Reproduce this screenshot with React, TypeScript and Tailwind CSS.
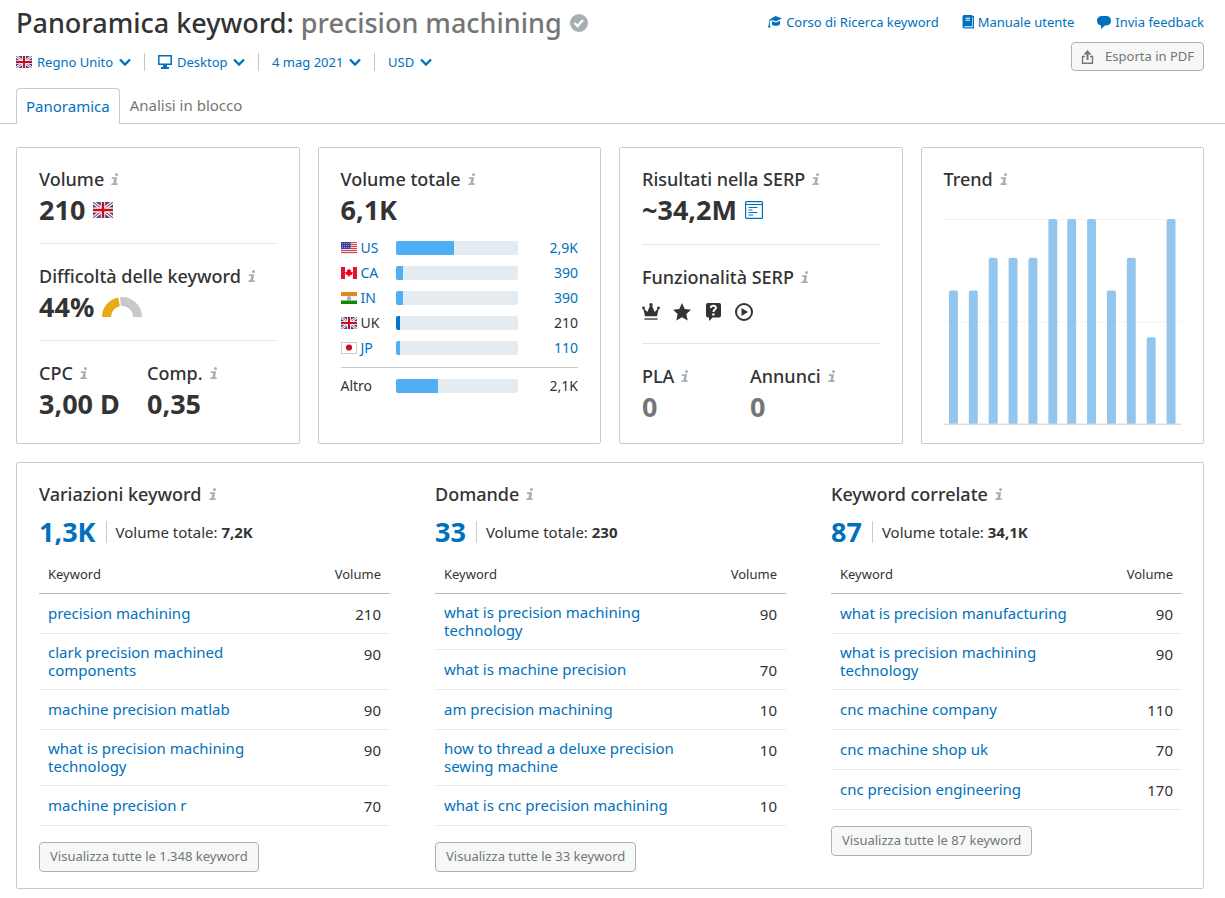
import React from "react";
import clsx from "clsx";

type Country = "us" | "ca" | "in" | "uk" | "jp";

interface VolumeRow {
  code: Country;
  label: string;
  volume: string;
  share: number;
  current?: boolean;
}

interface KeywordRow {
  keyword: string;
  volume: number;
}

interface KeywordGroup {
  title: string;
  count: string;
  total: string;
  more: string;
  rows: KeywordRow[];
}

const volumes: VolumeRow[] = [
  { code: "us", label: "US", volume: "2,9K", share: 47.5 },
  { code: "ca", label: "CA", volume: "390", share: 6.5 },
  { code: "in", label: "IN", volume: "390", share: 6.5 },
  { code: "uk", label: "UK", volume: "210", share: 3.3, current: true },
  { code: "jp", label: "JP", volume: "110", share: 3.3 },
];

const trend = [134, 134, 167, 167, 167, 206, 206, 206, 134, 167, 87, 206];

const groups: KeywordGroup[] = [
  {
    title: "Variazioni keyword",
    count: "1,3K",
    total: "7,2K",
    more: "Visualizza tutte le 1.348 keyword",
    rows: [
      { keyword: "precision machining", volume: 210 },
      { keyword: "clark precision machined components", volume: 90 },
      { keyword: "machine precision matlab", volume: 90 },
      { keyword: "what is precision machining technology", volume: 90 },
      { keyword: "machine precision r", volume: 70 },
    ],
  },
  {
    title: "Domande",
    count: "33",
    total: "230",
    more: "Visualizza tutte le 33 keyword",
    rows: [
      { keyword: "what is precision machining technology", volume: 90 },
      { keyword: "what is machine precision", volume: 70 },
      { keyword: "am precision machining", volume: 10 },
      { keyword: "how to thread a deluxe precision sewing machine", volume: 10 },
      { keyword: "what is cnc precision machining", volume: 10 },
    ],
  },
  {
    title: "Keyword correlate",
    count: "87",
    total: "34,1K",
    more: "Visualizza tutte le 87 keyword",
    rows: [
      { keyword: "what is precision manufacturing", volume: 90 },
      { keyword: "what is precision machining technology", volume: 90 },
      { keyword: "cnc machine company", volume: 110 },
      { keyword: "cnc machine shop uk", volume: 70 },
      { keyword: "cnc precision engineering", volume: 170 },
    ],
  },
];

const Flag = ({ code, className }: { code: Country; className: string }) => (
  <svg viewBox="0 0 16 12" preserveAspectRatio="none" className={clsx("shrink-0", className)} aria-hidden="true">
    {code === "uk" && (
      <>
        <rect width="16" height="12" fill="#2b4c9b" />
        <path d="M0 0 16 12M16 0 0 12" stroke="#fff" strokeWidth="2.6" />
        <path d="M0 0 16 12M16 0 0 12" stroke="#d8262f" strokeWidth="0.8" />
        <path d="M8 0v12M0 6h16" stroke="#fff" strokeWidth="3.6" />
        <path d="M8 0v12M0 6h16" stroke="#cf0a1c" strokeWidth="2" />
      </>
    )}
    {code === "us" && (
      <>
        <rect width="16" height="12" fill="#f6e3e5" />
        <path d="M0 .5h16M0 2.5h16M0 4.5h16M0 6.5h16M0 8.5h16M0 10.5h16" stroke="#d3404e" />
        <rect width="9.5" height="7" fill="#3d3f9e" />
        <path d="M1 1.5h8M1 3.5h8M1 5.5h8" stroke="#a9aad8" strokeWidth="0.8" strokeDasharray="1 1" />
      </>
    )}
    {code === "ca" && (
      <>
        <rect width="16" height="12" fill="#fff" />
        <path d="M0 0h4v12H0zM12 0h4v12h-4z" fill="#e8112d" />
        <path d="m8 1.500 1.200 1.700 1-.3-.3 1.900 2 .2-.6 1.300.4.600L9.200 8.500h-.8V10h-.8V8.500h-.8L4.300 6.900l.4-.6L4.100 5l2-.2-.3-1.900 1 .3z" fill="#f00018" />
      </>
    )}
    {code === "in" && (
      <>
        <rect width="16" height="12" fill="#fff" />
        <path d="M0 0h16v4H0z" fill="#e08a1e" />
        <path d="M0 8.5h16V12H0z" fill="#138808" />
        <circle cx="8" cy="6.2" r="1.7" fill="#b9c3e4" stroke="#5a6fb5" strokeWidth="0.6" />
      </>
    )}
    {code === "jp" && (
      <>
        <rect x=".5" y=".5" width="15" height="11" fill="#fff" stroke="#ccc" />
        <circle cx="8" cy="5.5" r="3.1" fill="#c8102e" />
      </>
    )}
  </svg>
);

const InfoIcon = () => (
  <svg viewBox="0 0 8 12" className="h-3 w-2 shrink-0" fill="#a6b0b3" aria-hidden="true">
    <circle cx="5.5" cy="1.5" r="1.5" />
    <path d="M1 4.3h5.200L5 10.300h1.800L6.500 12H.3l.3-1.700h1.800L3.200 6H.7z" />
  </svg>
);

const Chevron = () => (
  <svg viewBox="0 0 12 8" className="h-2 w-3 shrink-0" aria-hidden="true">
    <path d="m1 1.5 5 5 5-5" fill="none" stroke="#0071bc" strokeWidth="2.4" />
  </svg>
);

interface FilterProps {
  name: string;
  value: string;
  icon?: React.ReactNode;
}
const Filter = ({ name, value, icon }: FilterProps) => (
  <label className="flex items-center gap-[5px]">
    {icon}
    <select aria-label={name} className="cursor-pointer appearance-none bg-transparent text-[13px] leading-5 text-[#0071bc]">
      <option>{value}</option>
    </select>
    <Chevron />
  </label>
);

const Separator = () => <span className="mx-[13px] h-[18px] w-px bg-[#c4c7c8]" />;

const Heading = ({ children }: { children: React.ReactNode }) => (
  <h2 className="flex items-center gap-[7px] text-lg leading-6 font-medium whitespace-nowrap">
    {children}
    <InfoIcon />
  </h2>
);

interface MetricProps {
  title: string;
  children: React.ReactNode;
  className?: string;
}
const Metric = ({ title, children, className }: MetricProps) => (
  <div className={className}>
    <Heading>{title}</Heading>
    <div className="flex h-[38px] items-center gap-2 text-[27px] leading-8 font-bold">{children}</div>
  </div>
);

const Card = ({ children }: { children: React.ReactNode }) => (
  <section className="min-h-[297px] rounded-xs border border-[#c9cccd] px-[22px] pt-[19px]">{children}</section>
);

const Divider = () => <hr className="mt-3.5 mb-5 border-[#e4e8e9]" />;

const Gauge = () => (
  <svg viewBox="0 0 40 20" className="h-5 w-10" aria-hidden="true">
    <path d="M4.5 20A15.5 15.5 0 0 1 17 4.8" fill="none" stroke="#e6ab17" strokeWidth="9" />
    <path d="M18.500 4.600A15.500 15.500 0 0 1 35.500 20" fill="none" stroke="#c9c9c9" strokeWidth="9" />
  </svg>
);

const Bar = ({ share, current }: { share: number; current?: boolean }) => (
  <div className="h-3.5 overflow-hidden rounded-xs bg-[#e4ebf1]">
    <div className={clsx("h-full", current ? "bg-[#0a72c4]" : "bg-[#50aef4]")} style={{ width: `${share}%` }} />
  </div>
);

const VolumeTable = () => (
  <table className="w-full table-fixed text-sm leading-5">
    <colgroup>
      <col className="w-[55px]" />
      <col />
      <col className="w-[60px]" />
    </colgroup>
    <tbody>
      {volumes.map((row) => (
        <tr key={row.code} className="h-[25px]">
          <td>
            <span className="flex items-center gap-1">
              <Flag code={row.code} className="h-3 w-4" />
              {row.current ? row.label : <a href="#" className="text-[#0071bc]">{row.label}</a>}
            </span>
          </td>
          <td><Bar share={row.share} current={row.current} /></td>
          <td className="text-right">
            {row.current ? row.volume : <a href="#" className="text-[#0071bc]">{row.volume}</a>}
          </td>
        </tr>
      ))}
    </tbody>
    <tbody>
      <tr>
        <td colSpan={3} className="h-[7px] border-b border-[#c9cccd] p-0 leading-none" />
      </tr>
      <tr className="h-[38px]">
        <td>Altro</td>
        <td><Bar share={34.5} /></td>
        <td className="text-right">2,1K</td>
      </tr>
    </tbody>
  </table>
);

const SerpFeatures = () => (
  <div className="flex gap-[13px] pt-2">
    <svg viewBox="0 0 18 18" className="size-[18px]" fill="currentColor" role="img" aria-label="Sitelink">
      <path d="M1 4.500 5.300 9 8.300 2h1.400l3 7L17 4.500 15 13.300H3z" />
      <path d="M2.500 15h13v2h-13z" fill="#777" />
      <circle cx="1.500" cy="5" r="1.400" />
      <circle cx="9" cy="1.800" r="1.700" />
      <circle cx="16.500" cy="5" r="1.400" />
    </svg>
    <svg viewBox="0 0 18 18" className="size-[18px]" fill="currentColor" role="img" aria-label="Recensioni">
      <path d="m9 0 2.700 6 6.300.7-4.700 4.300 1.400 6.500L9 14.200l-5.700 3.300L4.700 11 0 6.700 6.300 6z" />
    </svg>
    <svg viewBox="0 0 18 18" className="size-[18px]" fill="currentColor" role="img" aria-label="Domande">
      <path d="M4 0h11a2 2 0 0 1 2 2v10.500a2 2 0 0 1-2 2H8.500L5 18v-3.500H4a2 2 0 0 1-2-2V2a2 2 0 0 1 2-2z" />
      <path d="M6.800 5c0-3 5.200-2.900 5.200-.2C12 6.500 9.400 6.600 9.400 9" fill="none" stroke="#fff" strokeWidth="1.900" />
      <circle cx="9.400" cy="11.500" r="1.200" fill="#fff" />
    </svg>
    <svg viewBox="0 0 18 18" className="size-[18px]" fill="currentColor" role="img" aria-label="Video">
      <circle cx="9" cy="9" r="8" fill="none" stroke="currentColor" strokeWidth="2" />
      <path d="M6.500 5v8L13 9z" />
    </svg>
  </div>
);

const TrendChart = () => (
  <svg viewBox="0 0 239 208" className="mt-7 w-full" role="img" aria-label="Trend">
    <path d="M0 .5h239M0 103.500h239" stroke="#f1f3f4" />
    {trend.map((value, i) => (
      <path
        key={i}
        d={`M${5 + Math.round(i * 19.9)} 206v${-value + 2}q0-2 2-2h5q2 0 2 2v${value - 2}z`}
        fill="#92c6ee"
      />
    ))}
    <path d="M0 206.500h239" stroke="#c9cccd" />
  </svg>
);

const KeywordList = ({ group }: { group: KeywordGroup }) => (
  <section className="flex flex-col items-start">
    <Heading>{group.title}</Heading>
    <div className="mt-2 flex h-9 items-center">
      <a href="#" className="text-[27px] leading-8 font-bold text-[#0071bc]">{group.count}</a>
      <p className="ml-2.5 border-l border-[#c9cccd] pl-[9px] text-[15px] leading-[22px]">
        Volume totale: <strong>{group.total}</strong>
      </p>
    </div>
    <table className="mt-[5px] w-full border-separate border-spacing-0">
      <thead>
        <tr className="h-[39px] text-[13px] leading-5">
          <th className="border-b border-[#b3bcbf] px-[9px] text-left font-normal">Keyword</th>
          <th className="w-20 border-b border-[#b3bcbf] px-[9px] text-right font-normal">Volume</th>
        </tr>
      </thead>
      <tbody className="text-[15px] leading-[18px]">
        {group.rows.map((row) => (
          <tr key={row.keyword} className="h-10">
            <td className="border-b border-[#e8ebec] pt-[9px] pr-5 pb-2.5 pl-[9px]">
              <a href="#" className="text-[#0071bc]">{row.keyword}</a>
            </td>
            <td className="border-b border-[#e8ebec] px-[9px] pt-[11px] text-right align-top">{row.volume}</td>
          </tr>
        ))}
      </tbody>
    </table>
    <button type="button" className="mt-4 h-[30px] rounded border border-[#a9b3b6] bg-[#f6f8f8] px-2.5 text-[13px] text-[#757575]">
      {group.more}
    </button>
  </section>
);

const App = () => {
  return (
    <main className="min-h-screen bg-white pb-2 font-['Noto_Sans',sans-serif] text-[#333]">
      <header className="flex justify-between gap-4 pr-[21px] pl-4">
        <div className="pt-[5px]">
          <h1 className="flex items-center text-[27px] leading-9 font-medium">
            <span>Panoramica keyword:&nbsp;</span>
            <span className="text-[#757575]">precision machining</span>
            <svg viewBox="0 0 18 18" className="ml-2 size-[18px]" aria-hidden="true">
              <circle cx="9" cy="9" r="9" fill="#a6b0b3" />
              <path d="m4.500 9 3 3L13 6" fill="none" stroke="#fff" strokeWidth="2.400" />
            </svg>
          </h1>
          <div className="mt-[9px] flex h-6 items-center">
            <Filter name="Paese" value="Regno Unito" icon={<Flag code="uk" className="h-3 w-4" />} />
            <Separator />
            <Filter
              name="Dispositivo"
              value="Desktop"
              icon={
                <svg viewBox="0 0 14 14" className="size-3.5" aria-hidden="true">
                  <path d="M.8.8h12.400v8.400H.8z" fill="none" stroke="#0071bc" strokeWidth="1.500" />
                  <path d="M5 9h4v3h2v2H3v-2h2z" fill="#0071bc" />
                </svg>
              }
            />
            <Separator />
            <Filter name="Data" value="4 mag 2021" />
            <Separator />
            <Filter name="Valuta" value="USD" />
          </div>
        </div>
        <div className="flex flex-col items-end pt-3">
          <nav className="flex gap-[23px] text-[13px] leading-5 text-[#0071bc]">
            <a href="#" className="flex items-center gap-1">
              <svg viewBox="0 0 14 12" className="h-3 w-3.5" fill="currentColor" aria-hidden="true">
                <path d="M7.500 0 14 2.500 8 5.300 1.500 3.400z" />
                <path d="M4 5.300 8 6.500l4-1.800v3.500c-2 2-6 2-8 .5z" />
                <path d="M1.500 3.400 4 4.200 1.800 5v3.500l.7 3H0l.8-3z" />
              </svg>
              Corso di Ricerca keyword
            </a>
            <a href="#" className="flex items-center gap-1">
              <svg viewBox="0 0 12 14" className="h-3.5 w-3" aria-hidden="true">
                <path d="M3 1.500h8.300v11.300H2.500" fill="none" stroke="currentColor" strokeWidth="1.300" />
                <path d="M2 0h8v11.300H2.500v2.200Q.5 13.300.5 11.500V2Q.5 0 2 0z" fill="currentColor" />
                <path d="M3.500 3.200h4.500M3.500 5.200h4.500" stroke="#fff" />
              </svg>
              Manuale utente
            </a>
            <a href="#" className="flex items-center gap-1">
              <svg viewBox="0 0 14 13" className="h-[13px] w-3.5" fill="currentColor" aria-hidden="true">
                <path d="M4.500 0h5C12 0 14 2 14 4.800S12 9.500 9.500 9.500H8L4 13V9.500C1.500 9.500 0 7.300 0 4.800S2 0 4.500 0z" />
              </svg>
              Invia feedback
            </a>
          </nav>
          <button type="button" className="mt-2.5 flex h-[29px] items-center gap-2.5 rounded border border-[#a9b3b6] bg-[#f6f8f8] px-[9px] text-[13px] text-[#757575]">
            <svg viewBox="0 0 14 14" className="size-3.5" fill="none" stroke="currentColor" strokeWidth="1.400" aria-hidden="true">
              <path d="M4 6.500H1.500v6.700h10V6.500H9" />
              <path d="M6.500 10V3" strokeWidth="2" />
              <path d="M2.500 4.500 6.500 0l4 4.500z" fill="currentColor" stroke="none" />
            </svg>
            Esporta in PDF
          </button>
        </div>
      </header>

      <nav className="mt-3.5 flex items-end border-b border-[#c9cccd] pl-4 text-[15px] leading-5">
        <a href="#" className="-mb-px h-9 rounded-t border border-b-0 border-[#c9cccd] bg-white px-[9px] pt-[7px] text-[#0071bc]">
          Panoramica
        </a>
        <a href="#" className="h-[35px] px-2.5 pt-[7px] text-[#757575]">Analisi in blocco</a>
      </nav>

      <div className="mt-[23px] pr-[21px] pl-4">
        <div className="grid grid-cols-4 gap-[18px]">
          <Card>
            <Metric title="Volume">
              210 <Flag code="uk" className="h-4 w-5" />
            </Metric>
            <Divider />
            <Metric title="Difficoltà delle keyword">
              44% <Gauge />
            </Metric>
            <Divider />
            <div className="flex">
              <Metric title="CPC" className="w-[108px]">3,00 D</Metric>
              <Metric title="Comp.">0,35</Metric>
            </div>
          </Card>

          <Card>
            <Metric title="Volume totale" className="mb-1.5">6,1K</Metric>
            <VolumeTable />
          </Card>

          <Card>
            <Metric title="Risultati nella SERP">
              ~34,2M
              <svg viewBox="0 0 18 18" className="size-[18px]" fill="none" stroke="#0071bc" role="img" aria-label="Vedi SERP">
                <rect x=".6" y=".6" width="16.8" height="16.8" rx="1" strokeWidth="1.2" />
                <path d="M1 3.500h16M3.500 6.500h9M3.500 9h4M3.500 11.500h9M3.500 14h4.500" />
              </svg>
            </Metric>
            <hr className="mt-[15px] mb-5 border-[#e4e8e9]" />
            <Metric title="Funzionalità SERP">
              <SerpFeatures />
            </Metric>
            <hr className="mt-4 mb-5 border-[#e4e8e9]" />
            <div className="flex">
              <Metric title="PLA" className="w-[108px]"><span className="text-[#757575]">0</span></Metric>
              <Metric title="Annunci"><span className="text-[#757575]">0</span></Metric>
            </div>
          </Card>

          <Card>
            <Heading>Trend</Heading>
            <TrendChart />
          </Card>
        </div>

        <div className="mt-[18px] grid grid-cols-3 gap-[45px] rounded-xs border border-[#c9cccd] pt-[19px] pr-[21px] pb-4 pl-[22px]">
          {groups.map((group) => (
            <KeywordList key={group.title} group={group} />
          ))}
        </div>
      </div>
    </main>
  );
};

export default App;
